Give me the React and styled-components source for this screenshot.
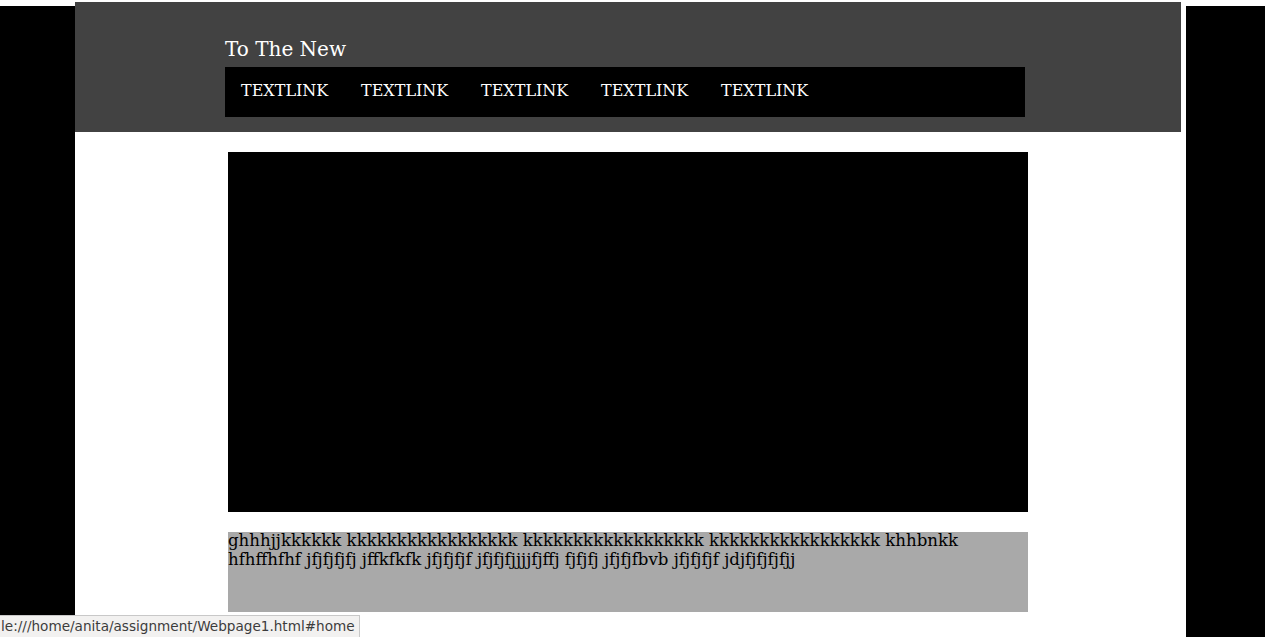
import React from "react";
import styled, { createGlobalStyle } from "styled-components";

const links = ["TEXTLINK", "TEXTLINK", "TEXTLINK", "TEXTLINK", "TEXTLINK"];

const App = () => {
  return (
    <>
      <GlobalStyle />
      <Page>
        <SideBar />
        <Center>
          <Header>
            <Title>To The New</Title>
            <Nav>
              {links.map((label, i) => (
                <NavLink key={i} href="#home">
                  {label}
                </NavLink>
              ))}
            </Nav>
          </Header>
          <Main>
            <Video />
            <TextBox>
              ghhhjjkkkkkk kkkkkkkkkkkkkkkkk kkkkkkkkkkkkkkkkkk kkkkkkkkkkkkkkkkk
              khhbnkk hfhffhfhf jfjfjfjfj jffkfkfk jfjfjfjf jfjfjfjjjjfjffj fjfjfj
              jfjfjfbvb jfjfjfjf jdjfjfjfjfjj
            </TextBox>
          </Main>
        </Center>
        <SideBar $right />
      </Page>
      <StatusBar>le:///home/anita/assignment/Webpage1.html#home</StatusBar>
    </>
  );
};

const GlobalStyle = createGlobalStyle`
  html, body {
    margin: 0;
    padding: 0;
    background: #ffffff;
    overflow: hidden;
  }
  body {
    font-family: "DejaVu Serif", "Liberation Serif", serif;
  }
`;

const Page = styled.div`
  display: flex;
  min-height: 100vh;
`;

const SideBar = styled.div`
  flex: none;
  width: ${(p) => (p.$right ? "79px" : "75px")};
  margin-top: 6px;
  margin-left: ${(p) => (p.$right ? "5px" : "0")};
  background: #000;
`;

const Center = styled.div`
  flex: none;
  width: 1106px;
`;

const Header = styled.header`
  margin-top: 2px;
  height: 130px;
  box-sizing: border-box;
  padding: 34px 0 0 150px;
  background: #424242;
`;

const Title = styled.h1`
  margin: 0;
  height: 31px;
  font-size: 20px;
  font-weight: normal;
  line-height: 26px;
  color: #ffffff;
`;

const Nav = styled.nav`
  display: flex;
  align-items: center;
  width: 800px;
  height: 50px;
  padding: 0 0 4px 16px;
  box-sizing: border-box;
  background: #000;
`;

const NavLink = styled.a`
  width: 120px;
  font-size: 16px;
  color: #ffffff;
  text-decoration: none;
`;

const Main = styled.main`
  display: flex;
  flex-direction: column;
  gap: 20px;
  padding: 20px 0 0 153px;
`;

const Video = styled.div`
  width: 800px;
  height: 360px;
  background: #000;
`;

const TextBox = styled.p`
  margin: 0;
  width: 800px;
  height: 80px;
  background: #a9a9a9;
  color: #000;
  font-size: 16.6px;
  line-height: 18.5px;
`;

const StatusBar = styled.div`
  position: fixed;
  left: 0;
  bottom: 0;
  height: 22px;
  padding: 0 4px 0 1px;
  box-sizing: border-box;
  background: #f2f1f0;
  border: 1px solid #c8c8c8;
  border-left: none;
  border-bottom: none;
  font-family: "DejaVu Sans", sans-serif;
  font-size: 13.6px;
  line-height: 21px;
  color: #3c3c3c;
`;

export default App;
